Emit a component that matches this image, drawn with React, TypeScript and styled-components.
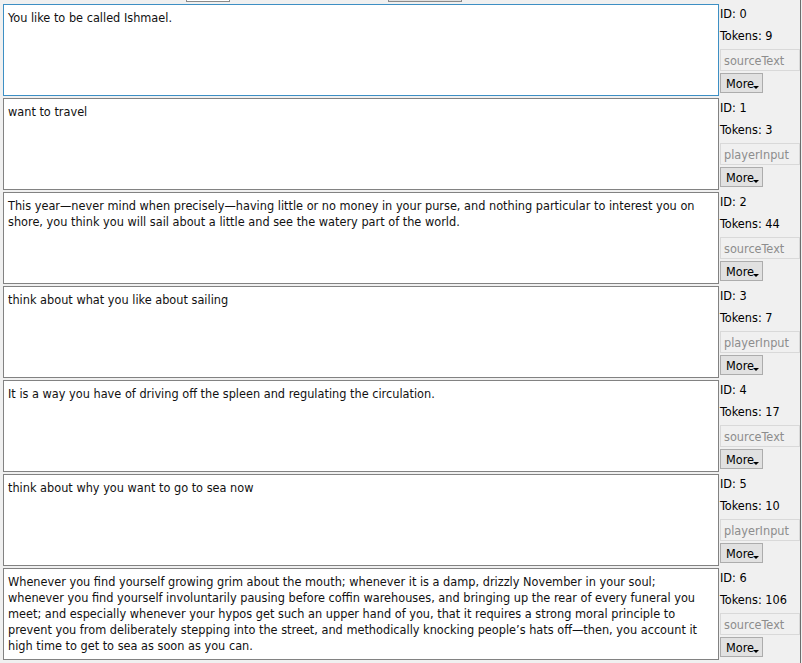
import React from "react";
import styled, { createGlobalStyle } from "styled-components";

const Global = createGlobalStyle`
  html, body { margin: 0; padding: 0; background: #f0f0f0; }
  body { width: 802px; height: 663px; overflow: hidden; }
`;

const Page = styled.div`
  width: 800px;
  height: 663px;
  border-right: 1px solid #6d6d6d;
  background: #f0f0f0;
  font-family: "DejaVu Sans Condensed", "DejaVu Sans", sans-serif;
  font-size: 12.6px;
  color: #000;
  overflow: hidden;
`;

const TopStrip = styled.div`
  height: 4px;
  display: flex;
  align-items: flex-start;
`;

const TopField = styled.div<{ $left: number; $w: number; $bg: string }>`
  margin-left: ${(p) => p.$left}px;
  width: ${(p) => p.$w}px;
  height: 1px;
  background: ${(p) => p.$bg};
  border: 1px solid #8a8a8a;
  border-top: none;
`;

const List = styled.div`
  display: flex;
  flex-direction: column;
  gap: 2px;
  padding-left: 3px;
`;

const Row = styled.div`
  display: grid;
  grid-template-columns: 716px 81px;
  height: 92px;
`;

const TextBox = styled.div<{ $focused?: boolean }>`
  box-sizing: border-box;
  height: 92px;
  background: #fff;
  border: 1px solid ${(p) => (p.$focused ? "#3d8fc4" : "#828282")};
  padding: 5px 4px 0 4px;
  line-height: 16px;
  white-space: pre-line;
  overflow: hidden;
  color: #111;
`;

const Side = styled.div`
  display: flex;
  flex-direction: column;
  padding-top: 2px;
  padding-left: 1px;
`;

const Label = styled.div<{ $mt?: number }>`
  height: 16px;
  line-height: 16px;
  margin-top: ${(p) => p.$mt ?? 0}px;
  white-space: nowrap;
`;

const Field = styled.div`
  box-sizing: border-box;
  margin-top: 5px;
  width: 80px;
  height: 22px;
  border: 1px solid #d9d9d9;
  background: #f0f0f0;
  color: #8d8d8d;
  padding: 1px 3px 0;
  line-height: 20px;
  white-space: nowrap;
  overflow: hidden;
`;

const MoreButton = styled.div`
  box-sizing: border-box;
  margin-top: 2px;
  width: 43px;
  height: 20px;
  border: 1px solid #acacac;
  background: #e1e1e1;
  padding-left: 5px;
  line-height: 19px;
  position: relative;
  color: #000;
`;

const Caret = styled.span`
  position: absolute;
  right: 3px;
  bottom: 3px;
  width: 0;
  height: 0;
  border-left: 3px solid transparent;
  border-right: 3px solid transparent;
  border-top: 3px solid #000;
`;

type Item = { id: number; tokens: number; kind: string; text: string };

const items: Item[] = [
  { id: 0, tokens: 9, kind: "sourceText", text: "You like to be called Ishmael." },
  { id: 1, tokens: 3, kind: "playerInput", text: "want to travel" },
  {
    id: 2,
    tokens: 44,
    kind: "sourceText",
    text:
      "This year—never mind when precisely—having little or no money in your purse, and nothing particular to interest you on\nshore, you think you will sail about a little and see the watery part of the world.",
  },
  { id: 3, tokens: 7, kind: "playerInput", text: "think about what you like about sailing" },
  {
    id: 4,
    tokens: 17,
    kind: "sourceText",
    text: "It is a way you have of driving off the spleen and regulating the circulation.",
  },
  { id: 5, tokens: 10, kind: "playerInput", text: "think about why you want to go to sea now" },
  {
    id: 6,
    tokens: 106,
    kind: "sourceText",
    text:
      "Whenever you find yourself growing grim about the mouth; whenever it is a damp, drizzly November in your soul;\nwhenever you find yourself involuntarily pausing before coffin warehouses, and bringing up the rear of every funeral you\nmeet; and especially whenever your hypos get such an upper hand of you, that it requires a strong moral principle to\nprevent you from deliberately stepping into the street, and methodically knocking people’s hats off—then, you account it\nhigh time to get to sea as soon as you can.",
  },
];

export default function App() {
  return (
    <Page>
      <Global />
      <TopStrip>
        <TopField $left={186} $w={42} $bg="#ffffff" />
        <TopField $left={158} $w={72} $bg="#e1e1e1" />
      </TopStrip>
      <List>
        {items.map((it) => (
          <Row key={it.id}>
            <TextBox $focused={it.id === 0}>{it.text}</TextBox>
            <Side>
              <Label>ID: {it.id}</Label>
              <Label $mt={6}>Tokens: {it.tokens}</Label>
              <Field>{it.kind}</Field>
              <MoreButton>
                More
                <Caret />
              </MoreButton>
            </Side>
          </Row>
        ))}
      </List>
    </Page>
  );
}
